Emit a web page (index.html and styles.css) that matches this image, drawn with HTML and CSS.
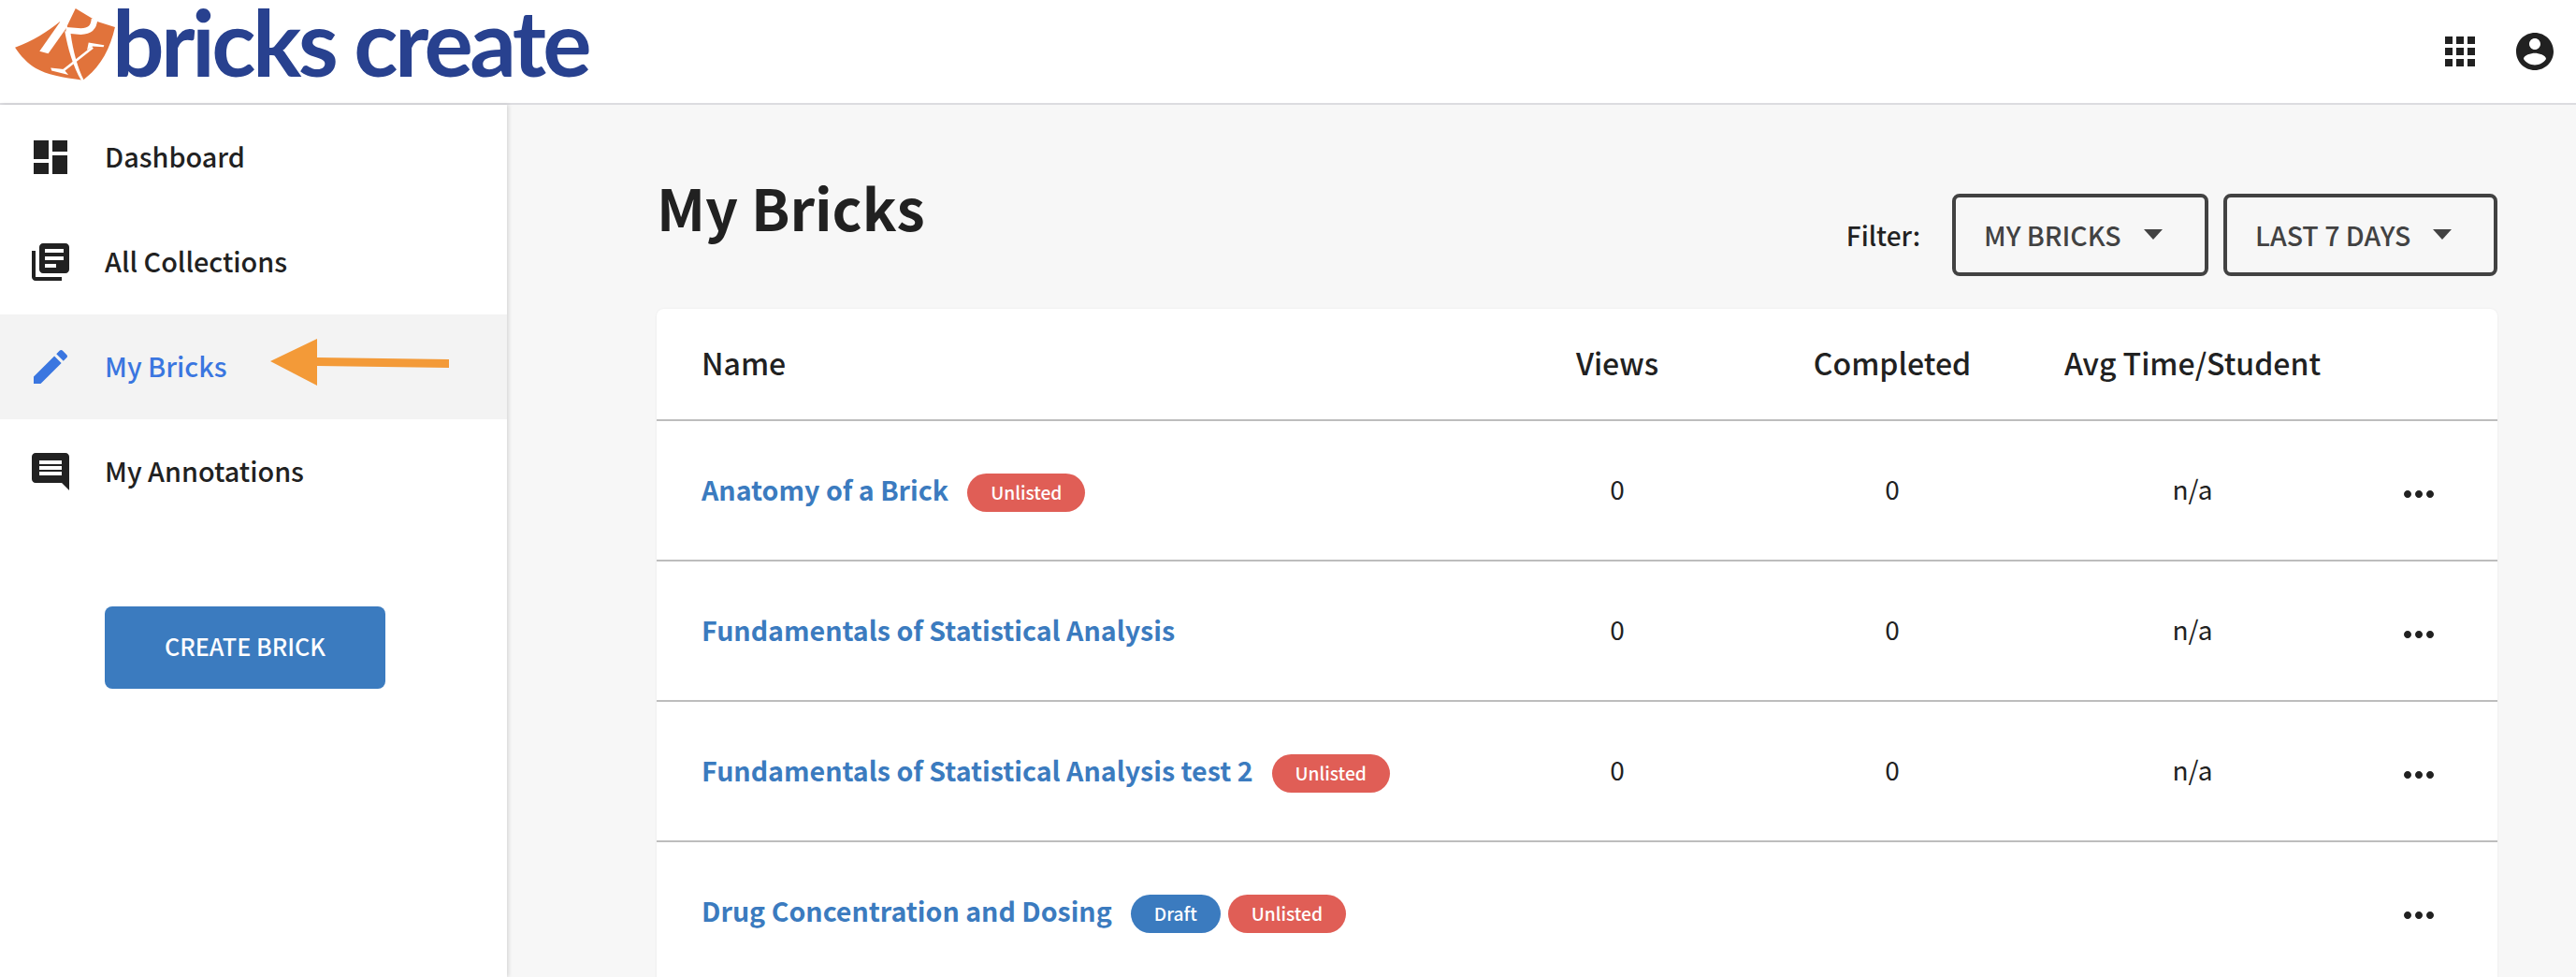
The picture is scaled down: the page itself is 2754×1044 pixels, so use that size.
FILE: index.html
```html
<!DOCTYPE html>
<html lang="en">
<head>
<meta charset="utf-8">
<title>My Bricks</title>
<link rel="stylesheet" href="styles.css">
</head>
<body>
<header class="topbar">
  <a class="logo">
    <svg class="logo-mark" viewBox="18 12 322 232" width="107" height="77">
      <path fill="#e1733b" d="M18 138 C75 118 125 85 162 55 L185 70 L213 12 L263 42 L285 55 L340 72 C325 140 295 195 250 232 L237 243 C170 235 120 225 85 205 C60 190 35 165 18 138Z"/>
      <path fill="#fff" d="M165 53 L187 70 L125 157 L97 150Z"/>
      <path fill="none" stroke="#fff" stroke-width="20" d="M274 46 C272 72 260 86 230 86 L182 82"/>
      <path fill="#fff" d="M178 85 L197 92 C205 150 220 205 240 243 L232 245 C205 200 188 140 178 85Z"/>
      <path fill="none" stroke="#fff" stroke-width="8" d="M268 138 L172 213"/>
      <path fill="#fff" d="M255 122 L305 130 L303 136 L268 134 L250 146Z M133 203 L175 208 L190 226 L136 212Z"/>
    </svg>
    <span class="logo-text">bricks create</span>
  </a>
  <div class="top-actions">
    <svg class="icon" viewBox="0 0 24 24"><path d="M4 8h4V4H4v4zm6 12h4v-4h-4v4zm-6 0h4v-4H4v4zm0-6h4v-4H4v4zm6 0h4v-4h-4v4zm6-10v4h4V4h-4zm-6 4h4V4h-4v4zm6 6h4v-4h-4v4zm0 6h4v-4h-4v4z"/></svg>
    <svg class="icon" viewBox="0 0 24 24"><path d="M12 2C6.48 2 2 6.48 2 12s4.48 10 10 10 10-4.480 10-10S17.520 2 12 2zm0 3c1.660 0 3 1.340 3 3s-1.340 3-3 3-3-1.340-3-3 1.340-3 3-3zm0 14.200c-2.500 0-4.710-1.280-6-3.220.03-1.990 4-3.080 6-3.080 1.990 0 5.970 1.090 6 3.080-1.290 1.940-3.500 3.220-6 3.220z"/></svg>
  </div>
</header>
<div class="shell">
  <aside class="sidebar">
    <nav>
      <a class="nav-item"><svg class="icon" viewBox="0 0 24 24"><path d="M3 13h8V3H3v10zm0 8h8v-6H3v6zm10 0h8V11h-8v10zm0-18v6h8V3h-8z"/></svg><span>Dashboard</span></a>
      <a class="nav-item"><svg class="icon" viewBox="0 0 24 24"><path d="M4 6H2v14c0 1.100.9 2 2 2h14v-2H4V6zm16-4H8c-1.100 0-2 .9-2 2v12c0 1.100.9 2 2 2h12c1.100 0 2-.9 2-2V4c0-1.100-.9-2-2-2zm-1 9H9V9h10v2zm-4 4H9v-2h6v2zm4-8H9V5h10v2z"/></svg><span>All Collections</span></a>
      <a class="nav-item active"><svg class="icon" viewBox="0 0 24 24"><path d="M3 17.250V21h3.750L17.810 9.940l-3.750-3.750L3 17.250zM20.710 7.040c.39-.39.39-1.020 0-1.410l-2.340-2.340c-.39-.39-1.020-.39-1.410 0l-1.830 1.830 3.750 3.750 1.830-1.830z"/></svg><span>My Bricks</span>
        <svg class="arrow" viewBox="0 0 191 50" width="191" height="50"><path fill="#f39a38" d="M0 24 L50 0 V20 L191 22 V31 L50 29 V50Z"/></svg>
      </a>
      <a class="nav-item"><svg class="icon" viewBox="0 0 24 24"><path d="M4 2h16c1.100 0 2 .9 2 2l.01 18-4-4H4c-1.100 0-2-.9-2-2V4c0-1.100.9-2 2-2zm2 12h12v-2H6v2zm0-3h12V9H6v2zm0-3h12V6H6v2z"/></svg><span>My Annotations</span></a>
    </nav>
    <button class="create">CREATE BRICK</button>
  </aside>
  <main class="content">
    <div class="title-row">
      <h1>My Bricks</h1>
      <div class="filters">
        <span class="filter-label">Filter:</span>
        <button class="select select-a">MY BRICKS<i class="caret"></i></button>
        <button class="select select-b">LAST 7 DAYS<i class="caret"></i></button>
      </div>
    </div>
    <section class="card">
      <div class="row head">
        <div class="name">Name</div><div class="num">Views</div><div class="num">Completed</div><div class="num">Avg Time/Student</div><div></div>
      </div>
      <div class="row">
        <div class="name"><a>Anatomy of a Brick</a><span class="badge red first">Unlisted</span></div><div class="num">0</div><div class="num">0</div><div class="num">n/a</div><div class="more"><svg class="dots" viewBox="0 0 24 24"><path d="M6 10c-1.100 0-2 .9-2 2s.9 2 2 2 2-.9 2-2-.9-2-2-2zm12 0c-1.100 0-2 .9-2 2s.9 2 2 2 2-.9 2-2-.9-2-2-2zm-6 0c-1.100 0-2 .9-2 2s.9 2 2 2 2-.9 2-2-.9-2-2-2z"/></svg></div>
      </div>
      <div class="row">
        <div class="name"><a>Fundamentals of Statistical Analysis</a></div><div class="num">0</div><div class="num">0</div><div class="num">n/a</div><div class="more"><svg class="dots" viewBox="0 0 24 24"><path d="M6 10c-1.100 0-2 .9-2 2s.9 2 2 2 2-.9 2-2-.9-2-2-2zm12 0c-1.100 0-2 .9-2 2s.9 2 2 2 2-.9 2-2-.9-2-2-2zm-6 0c-1.100 0-2 .9-2 2s.9 2 2 2 2-.9 2-2-.9-2-2-2z"/></svg></div>
      </div>
      <div class="row">
        <div class="name"><a>Fundamentals of Statistical Analysis test 2</a><span class="badge red first">Unlisted</span></div><div class="num">0</div><div class="num">0</div><div class="num">n/a</div><div class="more"><svg class="dots" viewBox="0 0 24 24"><path d="M6 10c-1.100 0-2 .9-2 2s.9 2 2 2 2-.9 2-2-.9-2-2-2zm12 0c-1.100 0-2 .9-2 2s.9 2 2 2 2-.9 2-2-.9-2-2-2zm-6 0c-1.100 0-2 .9-2 2s.9 2 2 2 2-.9 2-2-.9-2-2-2z"/></svg></div>
      </div>
      <div class="row">
        <div class="name"><a>Drug Concentration and Dosing</a><span class="badge blue first">Draft</span><span class="badge red">Unlisted</span></div><div class="num"></div><div class="num"></div><div class="num"></div><div class="more"><svg class="dots" viewBox="0 0 24 24"><path d="M6 10c-1.100 0-2 .9-2 2s.9 2 2 2 2-.9 2-2-.9-2-2-2zm12 0c-1.100 0-2 .9-2 2s.9 2 2 2 2-.9 2-2-.9-2-2-2zm-6 0c-1.100 0-2 .9-2 2s.9 2 2 2 2-.9 2-2-.9-2-2-2z"/></svg></div>
      </div>
    </section>
  </main>
</div>
</body>
</html>
```

FILE: styles.css
```css
* { box-sizing: border-box; }
html, body { margin: 0; height: 100%; overflow: hidden; }
body {
  font-family: "Noto Sans CJK SC", "Noto Sans", sans-serif;
  color: #212121;
  background: #f7f7f7;
}
.icon { width: 48px; height: 48px; fill: #212121; flex: none; display: block; }

.topbar {
  height: 112px;
  background: #fff;
  border-bottom: 2px solid #dcdce0;
  display: flex;
  align-items: center;
  justify-content: space-between;
  padding: 0 20px 0 16px;
}
.logo { display: flex; align-items: flex-start; align-self: flex-start; }
.logo-mark { display: block; margin-top: 9px; }
.logo-text {
  font-family: Lato, sans-serif;
  font-weight: 700;
  font-size: 98px;
  line-height: 88px;
  letter-spacing: -3.6px;
  color: #28418f;
  white-space: nowrap;
  margin-left: -3px;
}
.top-actions { display: flex; gap: 32px; }

.shell { display: flex; height: 932px; }
.sidebar {
  width: 542px;
  background: #fff;
  box-shadow: 2px 0 4px rgba(0,0,0,.12);
  flex: none;
}
.nav-item {
  position: relative;
  height: 112px;
  display: flex;
  align-items: center;
  gap: 34px;
  padding-left: 30px;
  font-size: 28.8px;
  font-weight: 500;
}
.nav-item span { padding-bottom: 3px; }
.nav-item.active { background: #f3f3f3; color: #3a76e0; }
.nav-item.active .icon { fill: #3a76e0; }
.arrow { position: absolute; left: 289px; top: 26px; }
.create {
  display: block;
  width: 300px;
  height: 88px;
  margin: 88px 0 0 112px;
  padding: 0 0 4px;
  border: 0;
  border-radius: 8px;
  background: #3b7bbf;
  color: #fff;
  font: 500 25.2px "Noto Sans CJK SC", "Noto Sans", sans-serif;
}

.content { flex: 1; padding: 0 84px 0 160px; min-width: 0; }
.title-row { display: flex; justify-content: space-between; height: 218px; }
h1 { margin: 0; padding-top: 64px; font-size: 61px; font-weight: 700; line-height: 90px; }
.filters { display: flex; align-items: center; gap: 16px; padding-top: 60px; height: 218px; }
.filter-label { font-size: 28px; font-weight: 500; margin-right: 18px; }
.select {
  height: 88px;
  border: 4px solid #424242;
  border-radius: 8px;
  background: transparent;
  color: #424242;
  font: 500 28.5px "Noto Sans CJK SC", "Noto Sans", sans-serif;
  display: flex;
  align-items: center;
  padding: 0 0 2px 30px;
}
.select-a { width: 274px; }
.select-b { width: 293px; }
.caret {
  width: 0; height: 0;
  margin-left: 24px;
  border-left: 10px solid transparent;
  border-right: 10px solid transparent;
  border-top: 11px solid #424242;
}

.card { background: #fff; border-radius: 8px 8px 0 0; box-shadow: 0 0 3px rgba(0,0,0,.06); }
.row {
  display: grid;
  grid-template-columns: 880px 294px 294px 348px 151px;
  align-items: center;
  height: 150px;
  padding-bottom: 4px;
  border-bottom: 2px solid #bdbdbd;
  font-size: 28px;
}
.row.head { height: 120px; font-size: 32px; font-weight: 500; }
.name { padding-left: 48px; display: flex; align-items: center; white-space: nowrap; }
.name a { color: #3b7bbf; font-size: 28.6px; font-weight: 700; }
.num { text-align: center; white-space: nowrap; }
.more { padding: 12px 0 0 44px; }
.dots { width: 48px; height: 48px; fill: #212121; display: block; }
.badge {
  height: 41px;
  border-radius: 21px;
  color: #fff;
  font-size: 19.2px;
  font-weight: 500;
  line-height: 40px;
  padding: 0 25px;
  margin-left: 8px;
  margin-top: 8px;
}
.badge.first { margin-left: 20px; }
.red { background: #e05e56; }
.blue { background: #3b7bbf; }
```
